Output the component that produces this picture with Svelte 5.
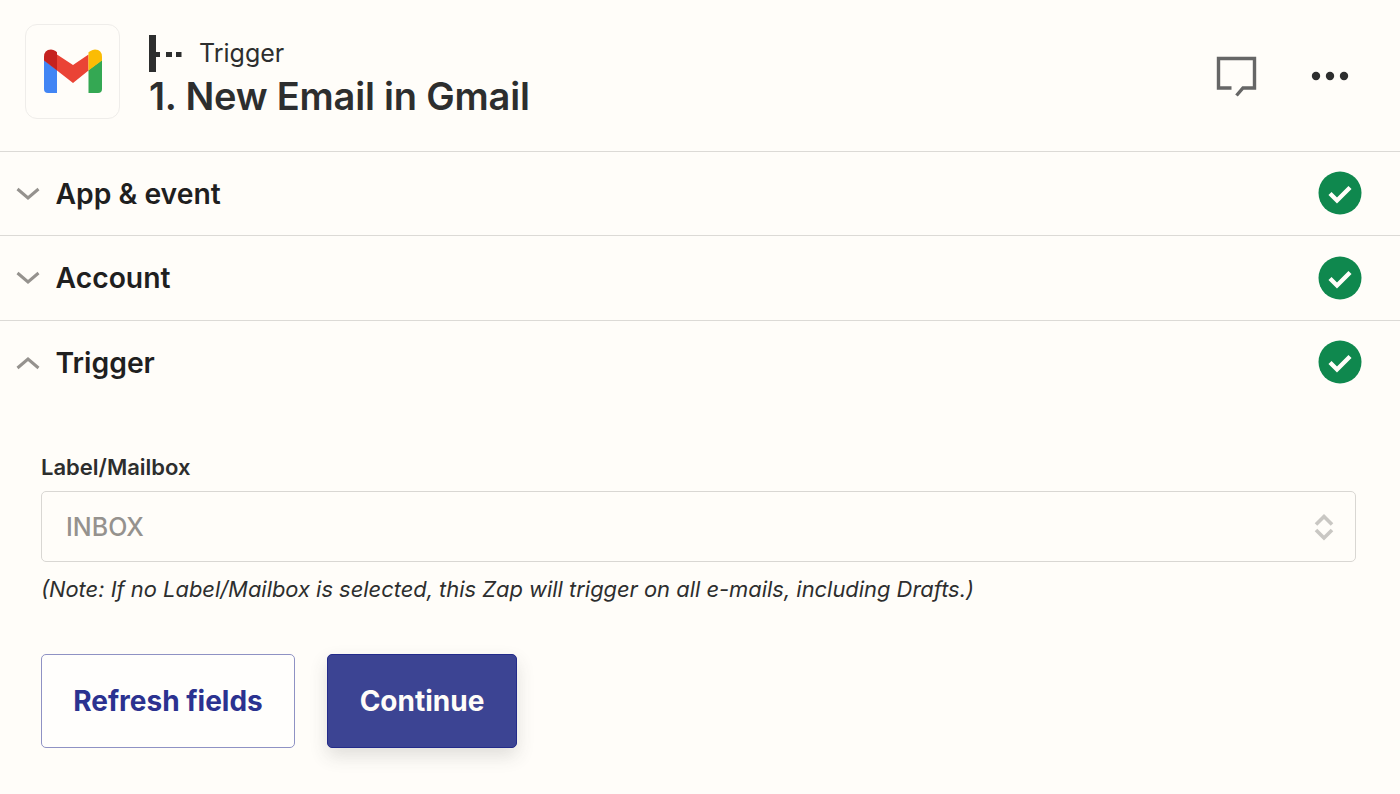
<script lang="ts">
    const sections = [
        { title: 'App & event', open: false },
        { title: 'Account', open: false },
        { title: 'Trigger', open: true }
    ];
</script>

<div class="step">
    <header class="step-header">
        <div class="app-logo">
            <svg width="58" height="44" viewBox="0 0 58 44">
                <path d="M0 11 L0 40 Q0 44 4 44 L13 44 L13 21 Z" fill="#4285f4" />
                <path d="M44.5 21 L44.5 44 L54 44 Q58 44 58 40 L58 11 Z" fill="#34a853" />
                <path d="M13 5.5 L13 21.5 L29 34 L44.5 21.5 L44.5 5.5 L29 16 Z" fill="#ea4335" />
                <path d="M0 8 Q0 0.5 7 0.5 Q9.5 0.5 11.5 2 L13 3.2 L13 21.5 L0 11.5 Z" fill="#c5221f" />
                <path d="M44.5 5.5 L44.5 21.5 L58 11.5 L58 8 Q58 0.5 51 0.5 Q48.5 0.5 46.5 2 L44.5 3.2 Z" fill="#fbbc04" />
            </svg>
        </div>
        <div class="titles">
            <div class="kind">
                <svg width="34" height="37" viewBox="0 0 34 37">
                    <rect x="0" y="0" width="7" height="37" fill="#2d2e2e" />
                    <rect x="7" y="17" width="4" height="5" fill="#2d2e2e" />
                    <rect x="17" y="17" width="6" height="5" fill="#2d2e2e" />
                    <rect x="27" y="17" width="5.5" height="5" fill="#2d2e2e" />
                </svg>
                <span>Trigger</span>
            </div>
            <h1>1. New Email in Gmail</h1>
        </div>
        <div class="actions">
            <svg class="comment" width="42" height="42" viewBox="0 0 42 42">
                <path d="M15.5 32 H2.5 V2.5 H38.5 V32 H27 L20.5 39.5" fill="none" stroke="#666" stroke-width="3.4" />
            </svg>
            <svg class="more" width="38" height="10" viewBox="0 0 38 10">
                <circle cx="5" cy="5" r="4.2" fill="#2d2e2e" />
                <circle cx="19" cy="5" r="4.2" fill="#2d2e2e" />
                <circle cx="33" cy="5" r="4.2" fill="#2d2e2e" />
            </svg>
        </div>
    </header>

    {#each sections as section}
        <section class="row">
            <svg class="chevron" width="24" height="14" viewBox="0 0 24 14">
                {#if section.open}
                    <path d="M1.5 12 L12 3 L22.5 12" fill="none" stroke="#95928e" stroke-width="3" />
                {:else}
                    <path d="M1.5 2 L12 11 L22.5 2" fill="none" stroke="#95928e" stroke-width="3" />
                {/if}
            </svg>
            <h2>{section.title}</h2>
            <svg class="done" width="44" height="44" viewBox="0 0 44 44">
                <circle cx="22" cy="22" r="21.5" fill="#0f884e" />
                <path d="M12 22.5 L19 29.5 L32 16.5" fill="none" stroke="#fffdf9" stroke-width="4.4" />
            </svg>
        </section>
    {/each}

    <div class="form">
        <label for="mailbox">Label/Mailbox</label>
        <div class="select" id="mailbox">
            <span>INBOX</span>
            <svg width="20" height="28" viewBox="0 0 20 28">
                <path d="M2 11.5 L10 3.5 L18 11.5" fill="none" stroke="#c9c7c3" stroke-width="3.6" />
                <path d="M2 17 L10 25 L18 17" fill="none" stroke="#c9c7c3" stroke-width="3.6" />
            </svg>
        </div>
        <p class="note">(Note: If no Label/Mailbox is selected, this Zap will trigger on all e-mails, including Drafts.)</p>
        <div class="buttons">
            <button class="secondary">Refresh fields</button>
            <button class="primary">Continue</button>
        </div>
    </div>
</div>

<style>
    :global(body) {
        background: #fffdf9;
    }
    .step {
        height: 794px;
        overflow: hidden;
        font-family: Inter, "Liberation Sans", sans-serif;
        color: #201515;
        background: #fffdf9;
    }
    .step-header {
        display: flex;
        align-items: flex-start;
        height: 150.8px;
        box-sizing: border-box;
        padding: 24px 0 0 25px;
    }
    .app-logo {
        width: 95px;
        height: 95px;
        box-sizing: border-box;
        display: flex;
        align-items: center;
        justify-content: center;
        border: 1px solid #efedea;
        border-radius: 12px;
    }
    .app-logo svg {
        margin-top: -1px;
    }
    .titles {
        margin-left: 29px;
        padding-top: 11px;
    }
    .kind {
        display: flex;
        align-items: center;
        gap: 16px;
        height: 37px;
        font-size: 25px;
        line-height: 37px;
        color: #2d2e2e;
    }
    .kind span {
        margin-top: -1px;
    }
    h1 {
        margin: 3px 0 0;
        font-size: 38px;
        line-height: 42px;
        font-weight: 600;
        letter-spacing: -0.2px;
        color: #2d2e2e;
    }
    .actions {
        margin-left: auto;
        display: flex;
        align-items: flex-start;
        padding: 32px 51px 0 0;
        gap: 53px;
    }
    .more {
        margin-top: 15px;
    }
    .row {
        display: flex;
        align-items: center;
        height: 84.5px;
        box-sizing: border-box;
        padding: 0 38px 0 16px;
        border-top: 1px solid #dcdad6;
    }
    .chevron {
        flex: none;
    }
    h2 {
        margin: 0 0 0 15.5px;
        font-size: 28.3px;
        line-height: 34px;
        font-weight: 600;
        color: #1f1f1f;
    }
    .done {
        margin-left: auto;
        margin-top: -1px;
    }
    .form {
        padding: 50px 44px 0 41px;
    }
    label {
        display: block;
        font-size: 22px;
        line-height: 26px;
        font-weight: 600;
        color: #2d2e2e;
    }
    .select {
        display: flex;
        align-items: center;
        justify-content: space-between;
        height: 71px;
        box-sizing: border-box;
        margin-top: 11px;
        padding: 0 21px 0 24px;
        border: 1.5px solid #d9d7d3;
        border-radius: 5px;
        font-size: 25px;
        font-weight: 500;
        color: #95928e;
    }
    .note {
        margin: 13px 0 0;
        font-size: 21.9px;
        line-height: 28px;
        font-style: italic;
        color: #2d2e2e;
    }
    .buttons {
        display: flex;
        gap: 32px;
        margin-top: 51px;
    }
    button {
        height: 94px;
        box-sizing: border-box;
        border-radius: 5px;
        font-family: inherit;
        font-size: 28px;
        font-weight: 650;
    }
    .secondary {
        width: 254px;
        background: #fffefc;
        border: 1.5px solid #8f92c4;
        color: #2b3290;
    }
    .primary {
        width: 190px;
        background: #3c4493;
        border: 1px solid #232b8a;
        color: #fffdf9;
        box-shadow: 0 8px 18px rgba(60, 60, 60, 0.16);
    }
</style>
